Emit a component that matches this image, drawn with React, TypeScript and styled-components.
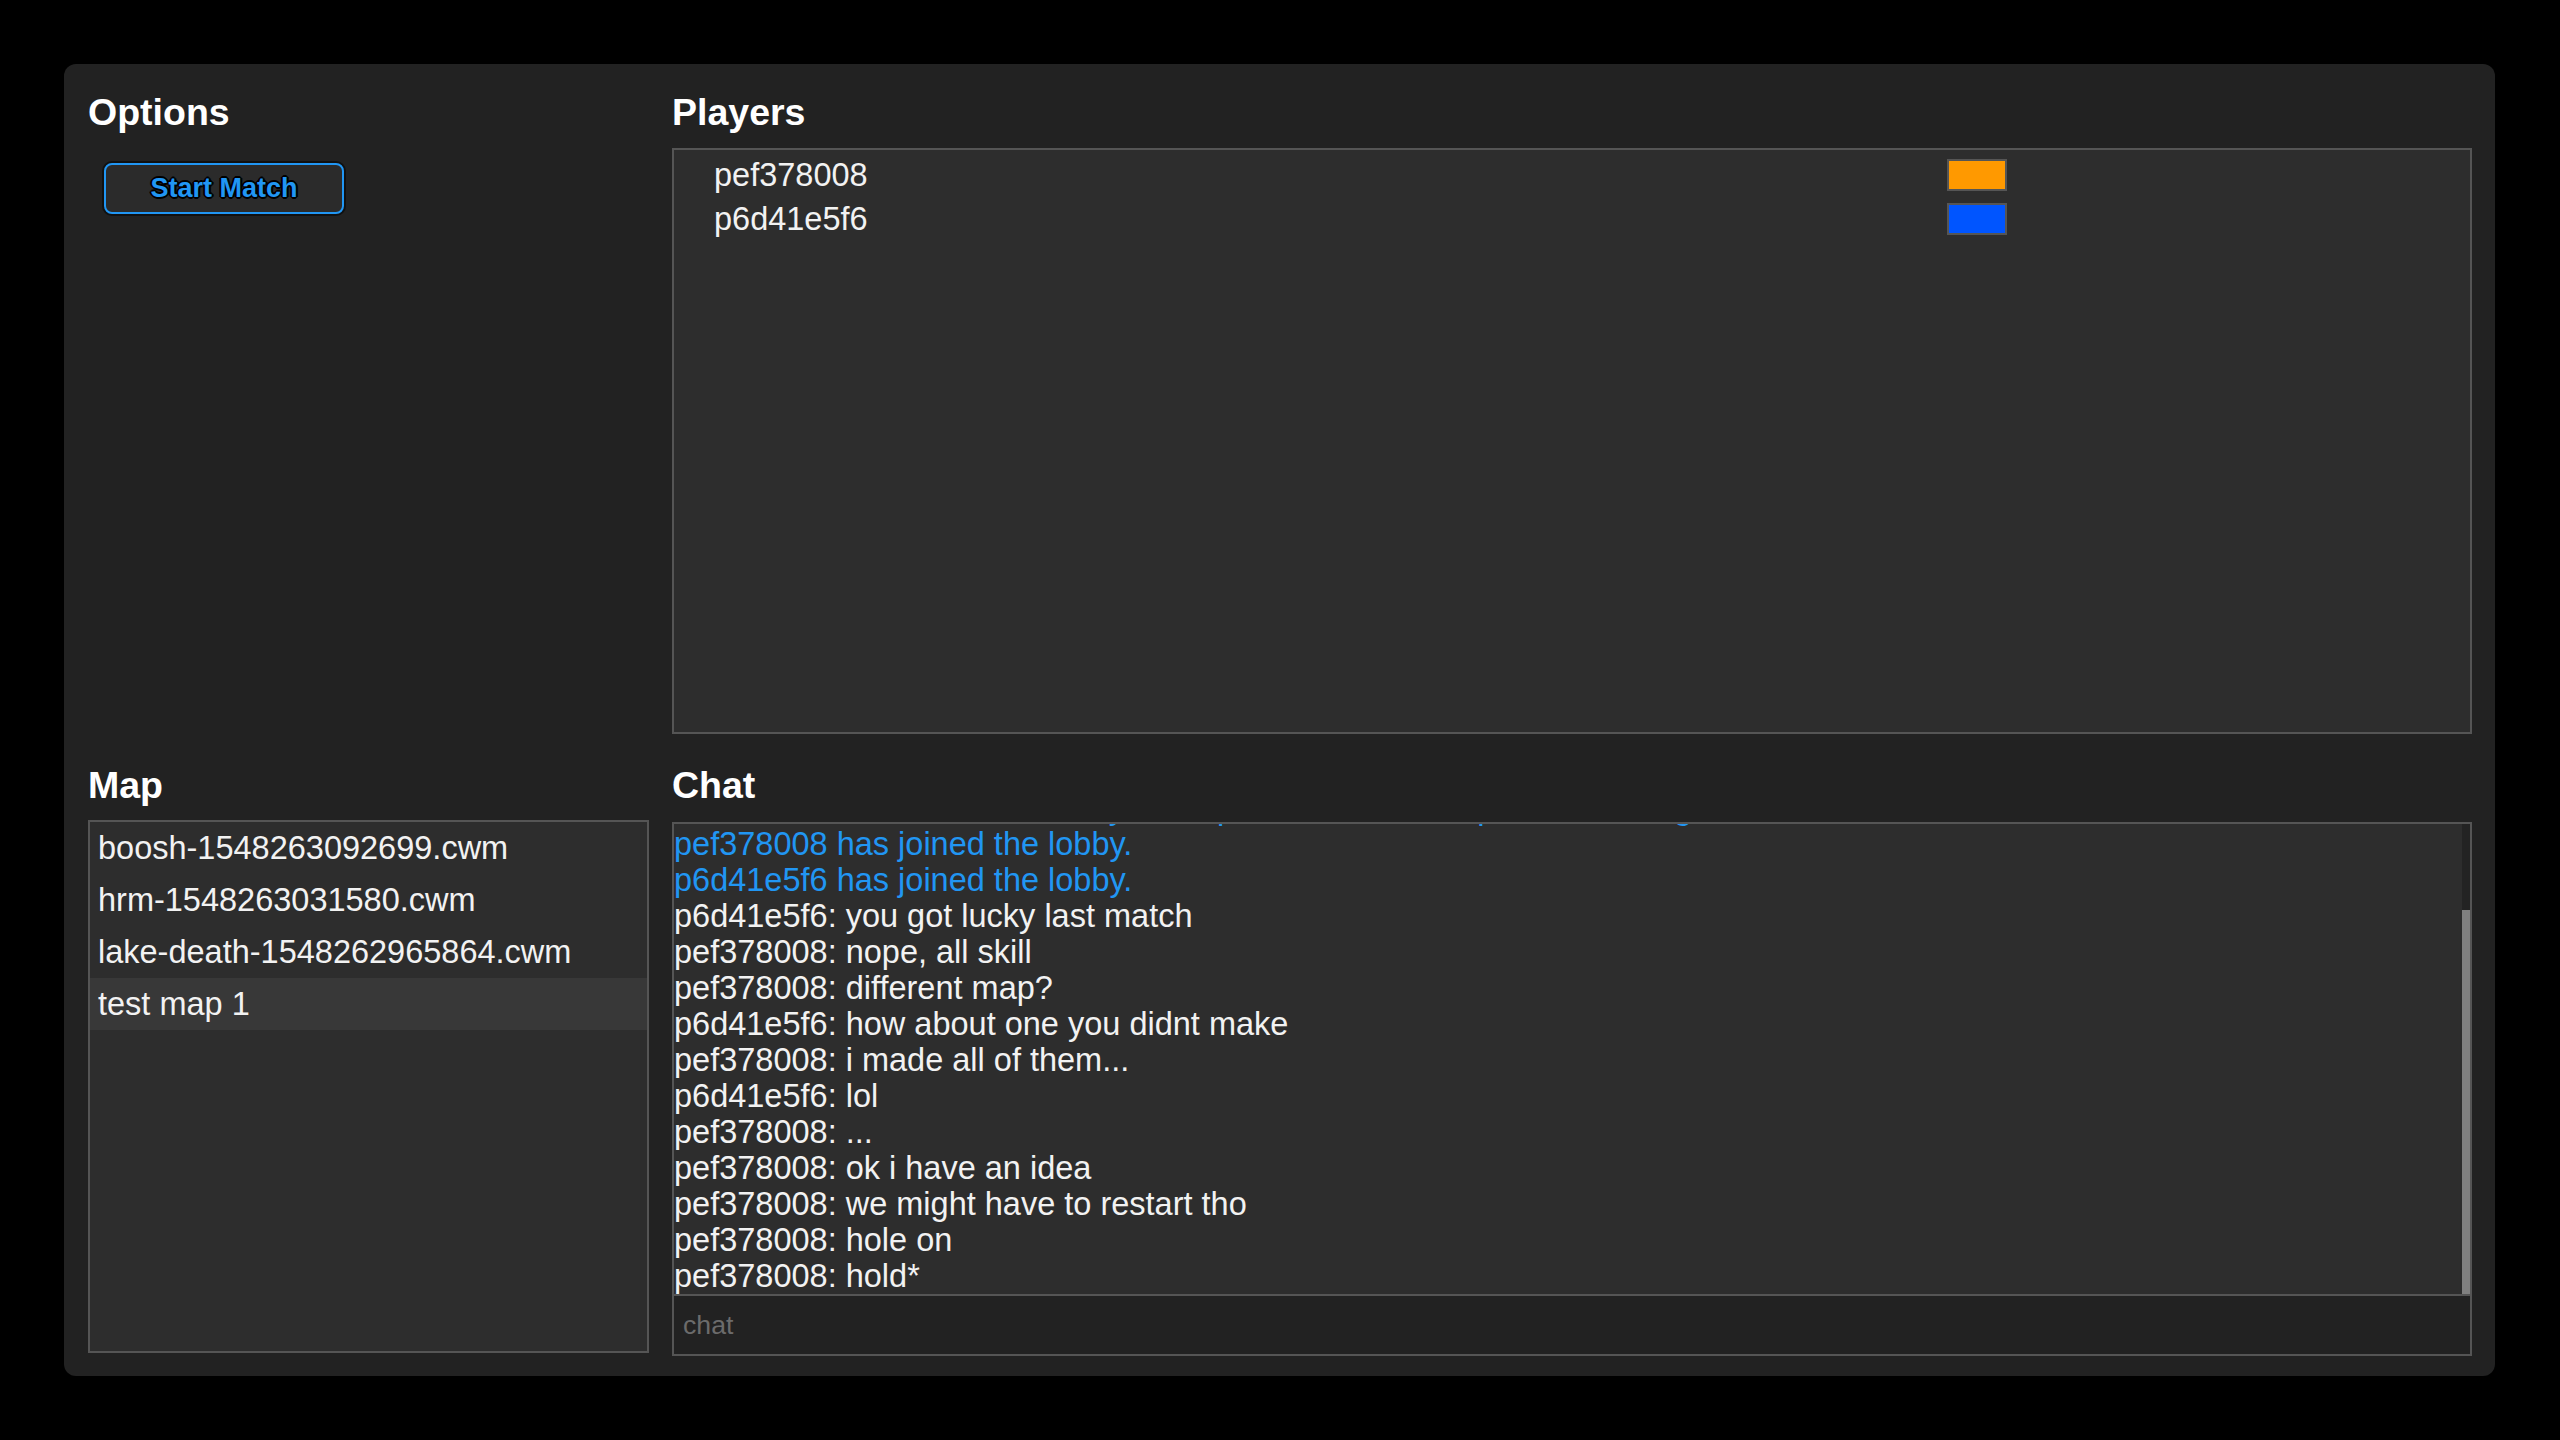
import React from "react";
import styled, { createGlobalStyle } from "styled-components";

const GlobalStyle = createGlobalStyle`
html, body {
  margin: 0;
  padding: 0;
  background: #000;
}
body {
  font-family: "Liberation Sans", Arial, Helvetica, sans-serif;
  color: #f2f2f2;
}
* {
  box-sizing: border-box;
}
`;

const Page = styled.div`
height: 100vh;
padding: 64px 65px 64px 64px;
`;

const Panel = styled.div`
height: 100%;
background: #222;
border-radius: 12px;
padding: 27px 23px 20px 24px;
display: grid;
grid-template-columns: 561px 1fr;
grid-template-rows: 643px 1fr;
column-gap: 23px;
row-gap: 30px;
`;

const Section = styled.section`
display: flex;
flex-direction: column;
min-height: 0;
`;

const Heading = styled.h3<{ $gap?: number }>`
margin: 0 0 ${(p) => p.$gap ?? 14}px;
font-size: 37.5px;
line-height: 43px;
font-weight: bold;
color: #fff;
`;

const StartButton = styled.button`
margin: 15px 0 0 16px;
width: 240px;
height: 51px;
border: 2px solid #2196f3;
border-radius: 8px;
background: #2b2b2b;
box-shadow: 0 0 0 2px #111;
color: #2196f3;
font-family: "Liberation Sans", Arial, sans-serif;
font-weight: bold;
font-size: 27px;
cursor: pointer;
text-shadow: -2px 0 0 #000, 2px 0 0 #000, 0 -2px 0 #000, 0 2px 0 #000,
  -1px -1px 0 #000, 1px 1px 0 #000, -1px 1px 0 #000, 1px -1px 0 #000;
`;

const Box = styled.div`
flex: 1;
min-height: 0;
border: 2px solid #555;
background: #2d2d2d;
`;

const PlayerList = styled(Box)`
padding: 3px 0;
`;

const PlayerRow = styled.div`
display: grid;
grid-template-columns: 1233px 60px;
align-items: center;
padding-left: 40px;
height: 44px;
font-size: 32.5px;
line-height: 44px;
`;

const Swatch = styled.div<{ $color: string }>`
width: 60px;
height: 32px;
border: 2px solid #555;
background: ${(p) => p.$color};
`;

const MapList = styled(Box)`
margin-bottom: 3px;
`;

const MapItem = styled.div<{ $selected?: boolean }>`
padding: 8px;
font-size: 32.5px;
line-height: 36px;
white-space: nowrap;
background: ${(p) => (p.$selected ? "#383838" : "transparent")};
`;

const ChatArea = styled.div`
flex: 1;
min-height: 0;
display: flex;
flex-direction: column;
margin-top: 2px;
`;

const Messages = styled(Box)`
display: flex;
`;

// newest lines stay at the bottom, older ones get clipped at the top
const MessageList = styled.div`
flex: 1;
min-width: 0;
display: flex;
flex-direction: column;
justify-content: flex-end;
overflow: hidden;
font-size: 32.5px;
line-height: 36px;
`;

const ScrollTrack = styled.div`
width: 8px;
flex: none;
background: #232323;
display: flex;
flex-direction: column;
justify-content: flex-end;
`;

const ScrollThumb = styled.div<{ $size: number }>`
height: ${(p) => p.$size}%;
background: #808080;
`;

const Message = styled.div<{ $system?: boolean }>`
flex: none;
white-space: nowrap;
color: ${(p) => (p.$system ? "#2196f3" : "#f2f2f2")};
`;

const ChatInput = styled.input`
height: 60px;
flex: none;
border: 2px solid #555;
border-top: none;
background: #222;
padding: 0 9px;
font-family: "Liberation Sans", Arial, sans-serif;
font-size: 26.67px;
color: #eee;
outline: none;
&::placeholder {
  color: #6b6b6b;
}
`;

const players = [
  { name: "pef378008", color: "#ff9900" },
  { name: "p6d41e5f6", color: "#0055ff" },
];

const maps = [
  "boosh-1548263092699.cwm",
  "hrm-1548263031580.cwm",
  "lake-death-1548262965864.cwm",
  "test map 1",
];

const messages: { text: string; system?: boolean }[] = [
  { text: "Connected to lobby server.", system: true },
  { text: "Welcome to the lobby!", system: true },
  { text: "Welcome all to the match lobby! Now pick a new match press start to go.", system: true },
  { text: "pef378008 has joined the lobby.", system: true },
  { text: "p6d41e5f6 has joined the lobby.", system: true },
  { text: "p6d41e5f6: you got lucky last match" },
  { text: "pef378008: nope, all skill" },
  { text: "pef378008: different map?" },
  { text: "p6d41e5f6: how about one you didnt make" },
  { text: "pef378008: i made all of them..." },
  { text: "p6d41e5f6: lol" },
  { text: "pef378008: ..." },
  { text: "pef378008: ok i have an idea" },
  { text: "pef378008: we might have to restart tho" },
  { text: "pef378008: hole on" },
  { text: "pef378008: hold*" },
];

const App = () => {
  return (
    <>
      <GlobalStyle />
      <Page>
        <Panel>
          <Section>
            <Heading>Options</Heading>
            <div>
              <StartButton>Start Match</StartButton>
            </div>
          </Section>
          <Section>
            <Heading>Players</Heading>
            <PlayerList>
              {players.map((p) => (
                <PlayerRow key={p.name}>
                  <span>{p.name}</span>
                  <Swatch $color={p.color} />
                </PlayerRow>
              ))}
            </PlayerList>
          </Section>
          <Section>
            <Heading $gap={13}>Map</Heading>
            <MapList>
              {maps.map((m) => (
                <MapItem key={m} $selected={m === "test map 1"}>
                  {m}
                </MapItem>
              ))}
            </MapList>
          </Section>
          <Section>
            <Heading $gap={13}>Chat</Heading>
            <ChatArea>
              <Messages>
                <MessageList>
                  {messages.map((m, i) => (
                    <Message key={i} $system={m.system}>
                      {m.text}
                    </Message>
                  ))}
                </MessageList>
                <ScrollTrack>
                  <ScrollThumb $size={81.7} />
                </ScrollTrack>
              </Messages>
              <ChatInput placeholder="chat" />
            </ChatArea>
          </Section>
        </Panel>
      </Page>
    </>
  );
};

export default App;
